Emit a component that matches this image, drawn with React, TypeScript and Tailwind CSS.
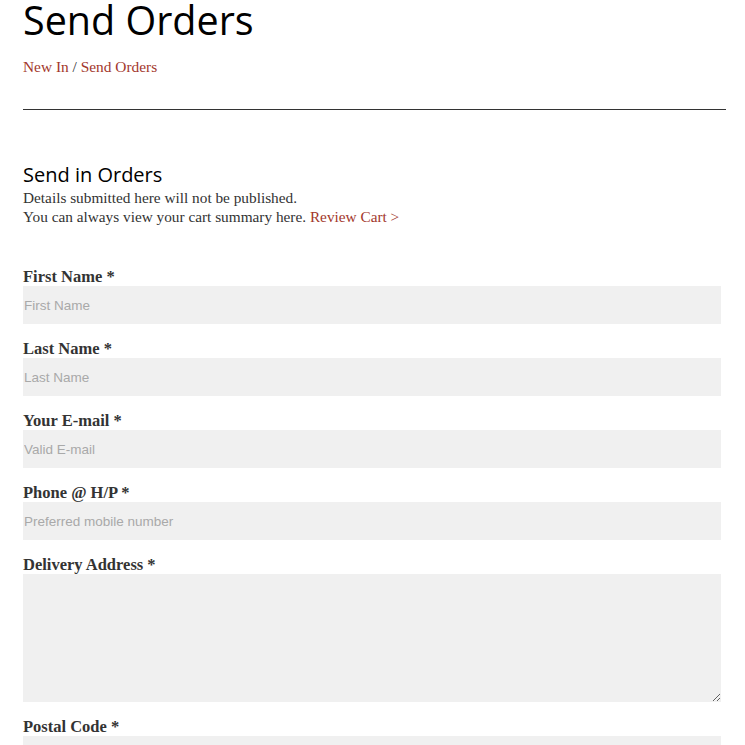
export default function App() {
  const fields = [
    { label: 'First Name *', placeholder: 'First Name' },
    { label: 'Last Name *', placeholder: 'Last Name' },
    { label: 'Your E-mail *', placeholder: 'Valid E-mail' },
    { label: 'Phone @ H/P *', placeholder: 'Preferred mobile number' },
  ];

  return (
    <div className="min-h-screen bg-white px-[23px] font-['Liberation_Serif',serif] text-[#333]">
      <div className="w-[703px]">
        <h1 className="font-['Open_Sans',sans-serif] text-[39.5px] leading-[40px] text-black">Send Orders</h1>
        <div className="mt-[18px] text-[15.4px] leading-[18px] text-[#a3372c]">
          <a href="#">New In</a>
          <span className="text-[#333]"> / </span>
          <a href="#">Send Orders</a>
        </div>
        <hr className="mt-[33px] border-t border-[#333]" />

        <h2 className="mt-[52px] font-['Open_Sans',sans-serif] text-[20px] leading-[26px] text-black">Send in Orders</h2>
        <p className="text-[15.3px] leading-[19px]">Details submitted here will not be published.</p>
        <p className="text-[15.3px] leading-[19px]">
          You can always view your cart summary here. <a href="#" className="text-[#a3372c]">Review Cart &gt;</a>
        </p>

        <form className="mt-[41px] w-[698px]">
          {fields.map((f) => (
            <div key={f.label} className="mb-[15px]">
              <label className="block text-[16.5px] font-bold leading-[19px]">{f.label}</label>
              <input
                type="text"
                placeholder={f.placeholder}
                className="block h-[38px] w-full bg-[#f0f0f0] px-[1px] font-['Liberation_Sans',sans-serif] text-[13.5px] text-[#333] outline-none placeholder:text-[#a9a9a9]"
              />
            </div>
          ))}
          <div className="mb-[15px]">
            <label className="block text-[16.5px] font-bold leading-[19px]">Delivery Address *</label>
            <textarea className="block h-[128px] w-full bg-[#f0f0f0] outline-none" />
          </div>
          <div>
            <label className="block text-[16.5px] font-bold leading-[19px]">Postal Code *</label>
            <input type="text" className="block h-[38px] w-full bg-[#f0f0f0] outline-none" />
          </div>
        </form>
      </div>
    </div>
  );
}
